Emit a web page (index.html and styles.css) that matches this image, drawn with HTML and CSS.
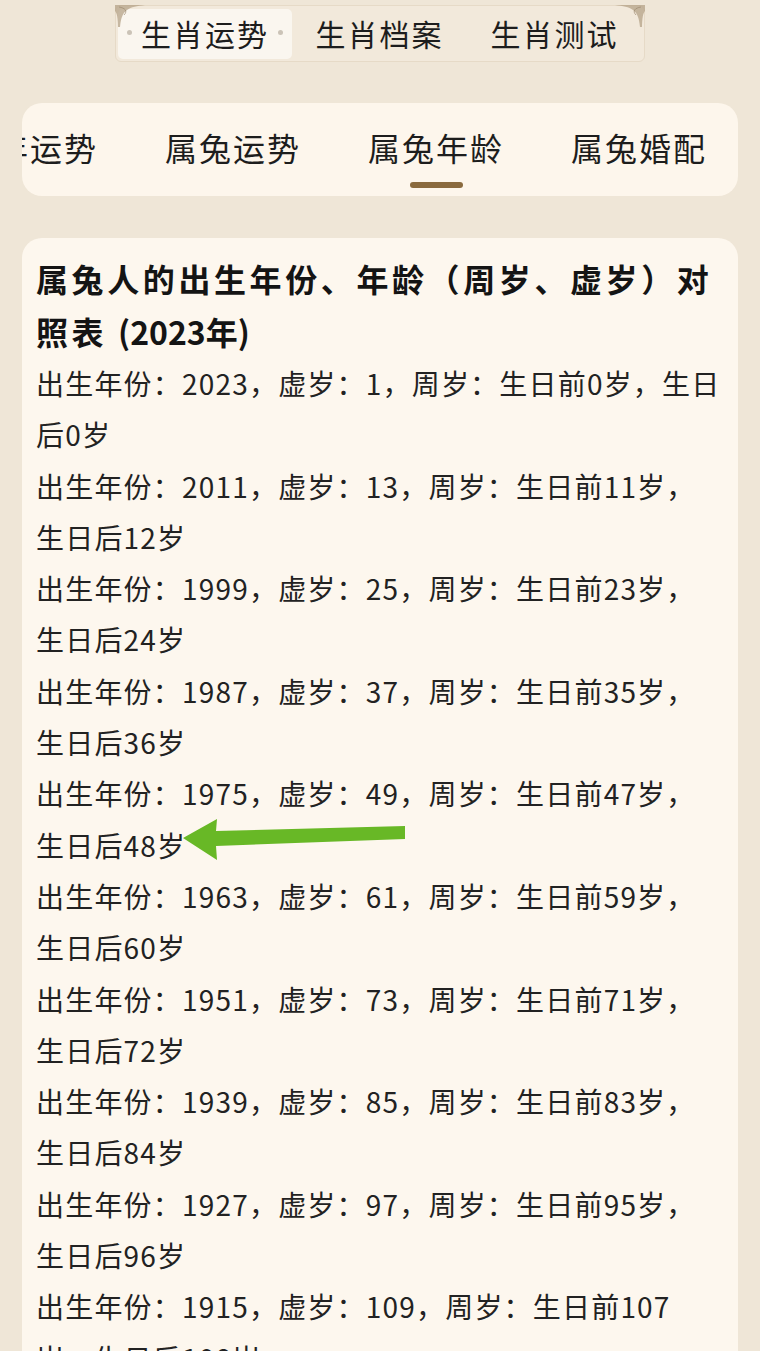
FILE: index.html
```html
<!DOCTYPE html>
<html lang="zh-CN">
<head>
<meta charset="utf-8">
<title>属兔年龄</title>
<link rel="stylesheet" href="styles.css">
</head>
<body>
<div class="page">
  <div class="topbar">
    <svg class="corner corner-l" viewBox="0 0 30 22" width="30" height="22"><path d="M0 0 H30 C22 1 16 2 12 5 C8 8 6 12 5 22 H3 C3 14 2 8 0 6 Z" fill="#b4a187" opacity="0.75"/><path d="M4 2 C10 3 13 6 9 10" stroke="#9c8a70" stroke-width="1" fill="none" opacity="0.7"/></svg>
    <svg class="corner corner-r" viewBox="0 0 30 22" width="30" height="22"><path d="M30 0 H0 C8 1 14 2 18 5 C22 8 24 12 25 22 H27 C27 14 28 8 30 6 Z" fill="#b4a187" opacity="0.75"/><path d="M26 2 C20 3 17 6 21 10" stroke="#9c8a70" stroke-width="1" fill="none" opacity="0.7"/></svg>
    <div class="ttab ttab-active"><i class="dot"></i><span>生肖运势</span><i class="dot"></i></div>
    <div class="ttab"><span>生肖档案</span></div>
    <div class="ttab"><span>生肖测试</span></div>
  </div>

  <div class="subnav">
    <div class="subrow">
      <div class="stab">兔年运势</div>
      <div class="stab">属兔运势</div>
      <div class="stab stab-active">属兔年龄<i class="bar"></i></div>
      <div class="stab">属兔婚配</div>
    </div>
  </div>

  <div class="card">
    <h1 class="title">属兔人的出生年份、年龄（周岁、虚岁）对<br>照表 <span class="title-year">(2023年)</span></h1>
    <p class="row">出生年份：2023，虚岁：1，周岁：生日前0岁，生日<br>后0岁</p>
    <p class="row">出生年份：2011，虚岁：13，周岁：生日前11岁，<br>生日后12岁</p>
    <p class="row">出生年份：1999，虚岁：25，周岁：生日前23岁，<br>生日后24岁</p>
    <p class="row">出生年份：1987，虚岁：37，周岁：生日前35岁，<br>生日后36岁</p>
    <p class="row">出生年份：1975，虚岁：49，周岁：生日前47岁，<br>生日后48岁</p>
    <p class="row">出生年份：1963，虚岁：61，周岁：生日前59岁，<br>生日后60岁</p>
    <p class="row">出生年份：1951，虚岁：73，周岁：生日前71岁，<br>生日后72岁</p>
    <p class="row">出生年份：1939，虚岁：85，周岁：生日前83岁，<br>生日后84岁</p>
    <p class="row">出生年份：1927，虚岁：97，周岁：生日前95岁，<br>生日后96岁</p>
    <p class="row">出生年份：1915，虚岁：109，周岁：生日前107<br>岁，生日后108岁</p>
  </div>

  <svg class="arrow" viewBox="0 0 230 50" width="230" height="50"><path d="M3 23 L37 4 L36 16 L225 11 L225 24 L36 31 L37 45 Z" fill="#68b826"/></svg>
</div>
</body>
</html>
```

FILE: styles.css
```css
html, body {
  margin: 0;
  padding: 0;
  background: #efe6d7;
}
body {
  font-family: "Noto Sans CJK SC", "Noto Sans", sans-serif;
  color: #1f1f1f;
}
.page {
  position: relative;
  width: 760px;
  height: 1351px;
  overflow: hidden;
  padding-top: 5px;
  box-sizing: border-box;
}
.topbar {
  position: relative;
  width: 530px;
  height: 57px;
  margin: 0 auto;
  box-sizing: border-box;
  padding: 3px 2px 2px;
  display: flex;
  background: #f2e9db;
  border: 1px solid #e6dac7;
  border-radius: 6px;
}
.corner {
  position: absolute;
  top: -1px;
}
.corner-l { left: -1px; }
.corner-r { right: -1px; }
.ttab {
  flex: 1;
  display: flex;
  align-items: center;
  justify-content: center;
  gap: 9px;
  font-size: 30px;
  line-height: 40px;
  padding-bottom: 3px;
  letter-spacing: 2px;
  color: #1d1d1d;
  border-radius: 5px;
}
.ttab-active {
  background: #faf6ef;
  flex: 0 0 174px;
}
.dot {
  display: block;
  width: 5px;
  height: 5px;
  border-radius: 50%;
  background: #cbc3b7;
}
.subnav {
  margin: 41px 22px 0;
  height: 93px;
  background: #fdf6ec;
  border-radius: 20px;
  overflow: hidden;
}
.subrow {
  display: flex;
  align-items: flex-start;
  gap: 67px;
  margin-left: -60px;
  padding-top: 24px;
  white-space: nowrap;
}
.stab {
  flex: 0 0 auto;
  display: flex;
  flex-direction: column;
  align-items: center;
  font-size: 32px;
  line-height: 40px;
  letter-spacing: 2px;
  color: #1d1d1d;
}
.bar {
  display: block;
  width: 53px;
  height: 6px;
  margin-top: 15px;
  border-radius: 3px;
  background: #8a6a3e;
}
.card {
  margin: 42px 22px 0;
  padding: 14px 14px 20px;
  background: #fdf7ee;
  border-radius: 20px;
  min-height: 1200px;
}
.title {
  margin: 0;
  font-size: 32px;
  font-weight: 700;
  line-height: 53px;
  letter-spacing: 3.6px;
  color: #141414;
  white-space: nowrap;
}
.title-year {
  letter-spacing: 0;
}
.row {
  margin: 0;
  font-size: 28px;
  line-height: 51.3px;
  letter-spacing: 1.2px;
  color: #222;
  white-space: nowrap;
}
.arrow {
  position: absolute;
  left: 180px;
  top: 815px;
}
```
